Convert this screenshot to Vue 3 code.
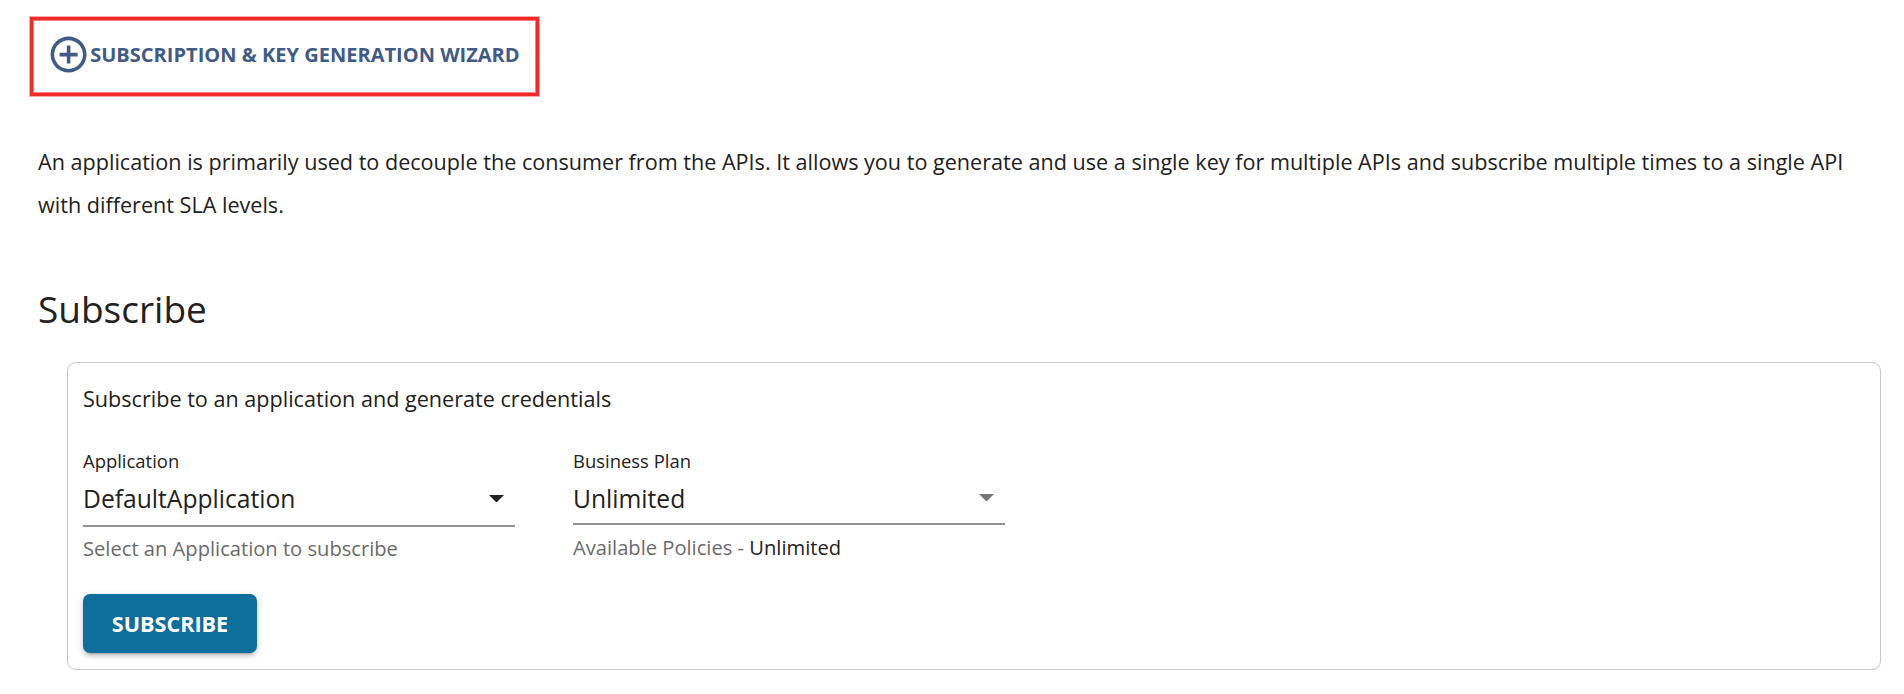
<script setup>
const fields = [
  { id: 'application', label: 'Application', value: 'DefaultApplication', help: 'Select an Application to subscribe', strong: '' },
  { id: 'plan', label: 'Business Plan', value: 'Unlimited', help: 'Available Policies - ', strong: 'Unlimited' },
]
</script>

<template>
  <main class="page">
    <button class="wizard">
      <svg class="wizard-icon" viewBox="0 0 24 24" aria-hidden="true">
        <path d="M13 7h-2v4H7v2h4v4h2v-4h4v-2h-4V7zm-1-5C6.48 2 2 6.48 2 12s4.48 10 10 10 10-4.48 10-10S17.52 2 12 2zm0 18c-4.41 0-8-3.59-8-8s3.59-8 8-8 8 3.59 8 8-3.59 8-8 8z" />
      </svg>
      <span>SUBSCRIPTION &amp; KEY GENERATION WIZARD</span>
    </button>
    <p class="intro">An application is primarily used to decouple the consumer from the APIs. It allows you to generate and use a single key for multiple APIs and subscribe multiple times to a single API with different SLA levels.</p>
    <h2 class="title">Subscribe</h2>
    <section class="card">
      <p class="card-text">Subscribe to an application and generate credentials</p>
      <div class="fields">
        <div v-for="f in fields" :key="f.id" class="field" :class="f.id">
          <div class="label">{{ f.label }}</div>
          <div class="select">
            <span class="value">{{ f.value }}</span>
            <svg class="arrow" viewBox="0 0 10 5" aria-hidden="true"><path d="M0 0l5 5 5-5z" /></svg>
          </div>
          <div class="help">{{ f.help }}<span class="strong">{{ f.strong }}</span></div>
        </div>
      </div>
      <button class="submit">SUBSCRIBE</button>
    </section>
  </main>
</template>

<style>
body { margin: 0; background: #fff; }
</style>

<style scoped>
.page {
  box-sizing: border-box;
  height: 694px;
  padding: 17px 23px 0 30px;
  overflow: hidden;
  font-family: "Open Sans", "Noto Sans", sans-serif;
  color: #222;
}
button { font-family: inherit; border: 0; margin: 0; }
.wizard {
  display: flex;
  align-items: center;
  box-sizing: border-box;
  width: 509px;
  height: 79px;
  padding: 0 0 4px 14px;
  border: 3px solid #f22a2c;
  box-shadow: 0 0 0 1px #f9a9aa, inset 0 0 0 1px #f77f80;
  background: #fff;
  color: #415b87;
  font-size: 20px;
  font-weight: 700;
  letter-spacing: 0.02px;
  white-space: nowrap;
}
.wizard-icon { width: 43.2px; height: 43.2px; flex: none; fill: currentColor; }
.intro {
  margin: 44px 0 0 8px;
  width: 1820px;
  font-size: 21.6px;
  line-height: 43.2px;
}
.title {
  margin: 54px 0 0 8px;
  font-size: 37px;
  font-weight: 400;
  line-height: 58px;
}
.card {
  box-sizing: border-box;
  height: 308px;
  margin: 23.6px 0 0 37px;
  padding: 20px 15px 0;
  border: 1px solid #c6c6c6;
  border-radius: 9px;
}
.card-text { margin: 0; font-size: 21.6px; line-height: 31px; }
.fields { display: flex; gap: 58px; margin-top: 34px; height: 146px; }
.field { width: 432px; white-space: nowrap; }
.label { font-size: 18.45px; line-height: 26px; }
.select {
  display: flex;
  align-items: center;
  justify-content: space-between;
  box-sizing: border-box;
  height: 51px;
  margin-top: 2px;
  padding: 0 11px 4px 0;
  border-bottom: 2px solid #949494;
}
.plan .select { height: 49px; padding-bottom: 2px; }
.value { font-size: 24.65px; line-height: 34px; }
.arrow { width: 15px; height: 7.5px; fill: #222; }
.plan .arrow { margin-bottom: 2px; fill: #757575; }
.help { margin-top: 7px; font-size: 20.15px; line-height: 28px; color: #6b6b6b; white-space: pre; }
.plan .help { margin-top: 8px; }
.strong { color: #222; }
.submit {
  width: 174px;
  height: 59px;
  padding: 0;
  border-radius: 7px;
  background: #0e6f9c;
  box-shadow: 0 5px 2px -4px #0003, 0 3px 4px #00000024, 0 2px 8px #0000001f;
  color: #fff;
  font-size: 21.6px;
  font-weight: 700;
}
</style>
